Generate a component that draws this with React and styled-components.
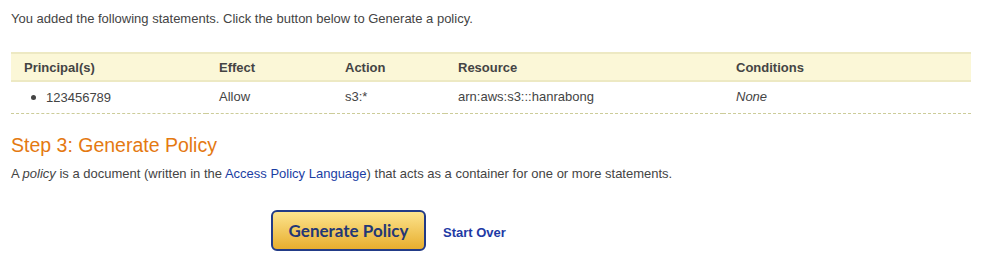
import React from 'react'
import styled, { createGlobalStyle } from 'styled-components'

const Global = createGlobalStyle`
    body {
        margin: 0;
        background: #fff;
        font-family: "Liberation Sans", Arial, sans-serif;
        font-size: 13px;
        color: #444;
    }
`

const Page = styled.div`
    padding: 11px 11px 0 11px;
    width: 960px;
`

const Intro = styled.p`
    margin: 0;
    line-height: 16px;
`

const Table = styled.table`
    margin-top: 25px;
    width: 960px;
    border-collapse: collapse;
    table-layout: fixed;
`

const Head = styled.th`
    box-sizing: border-box;
    background: #fbf7d7;
    border-top: 2px solid #ede9c3;
    border-bottom: 2px solid #ede9c3;
    text-align: left;
    font-weight: bold;
    color: #444;
    padding: 0 0 0 13px;
    height: 28px;
    width: ${({w}) => w}px;
`

const Cell = styled.td`
    box-sizing: border-box;
    padding: 0 0 2px 13px;
    height: 32px;
    border-bottom: 1px dashed #cccc99;
    font-style: ${({em}) => em ? `italic` : `normal`};
`

const Bullet = styled.span`
    display: inline-flex;
    align-items: center;
    gap: 10px;
    padding-left: 7px;
    &::before {
        content: '';
        width: 5px;
        height: 5px;
        border-radius: 50%;
        background: #444;
    }
`

const Heading = styled.h2`
    margin: 20px 0 0 0;
    font-weight: normal;
    font-size: 19.5px;
    color: #e47911;
    line-height: 22px;
`

const Text = styled.p`
    margin: 10px 0 0 0;
    line-height: 16px;
    a {
        color: #1a3ea3;
        text-decoration: none;
    }
`

const Actions = styled.div`
    display: flex;
    align-items: center;
    gap: 17px;
    margin: 28px 0 0 260px;
`

const GenerateButton = styled.button`
    width: 155px;
    height: 41px;
    border: 2px solid #223b87;
    border-radius: 6px;
    background: linear-gradient(#fde48e, #e7ae2e);
    color: #233776;
    font-family: Lato, "Open Sans", sans-serif;
    font-weight: bold;
    font-size: 17px;
    padding: 0;
    cursor: pointer;
`

const StartOver = styled.a`
    color: #1e3aa5;
    font-weight: bold;
    text-decoration: none;
    margin-top: 4px;
`

const cols = [
    ['Principal(s)', 195],
    ['Effect', 126],
    ['Action', 113],
    ['Resource', 278],
    ['Conditions', 248],
]

export default function App() {
    return (
        <Page>
            <Global />
            <Intro>You added the following statements. Click the button below to Generate a policy.</Intro>
            <Table>
                <thead>
                    <tr>
                        {cols.map(([label, w]) => <Head key={label} w={w}>{label}</Head>)}
                    </tr>
                </thead>
                <tbody>
                    <tr>
                        <Cell><Bullet>123456789</Bullet></Cell>
                        <Cell>Allow</Cell>
                        <Cell>s3:*</Cell>
                        <Cell>arn:aws:s3:::hanrabong</Cell>
                        <Cell em>None</Cell>
                    </tr>
                </tbody>
            </Table>
            <Heading>Step 3: Generate Policy</Heading>
            <Text>
                A <i>policy</i> is a document (written in the <a href="#">Access Policy Language</a>) that acts as a container for one or more statements.
            </Text>
            <Actions>
                <GenerateButton>Generate Policy</GenerateButton>
                <StartOver href="#">Start Over</StartOver>
            </Actions>
        </Page>
    )
}
